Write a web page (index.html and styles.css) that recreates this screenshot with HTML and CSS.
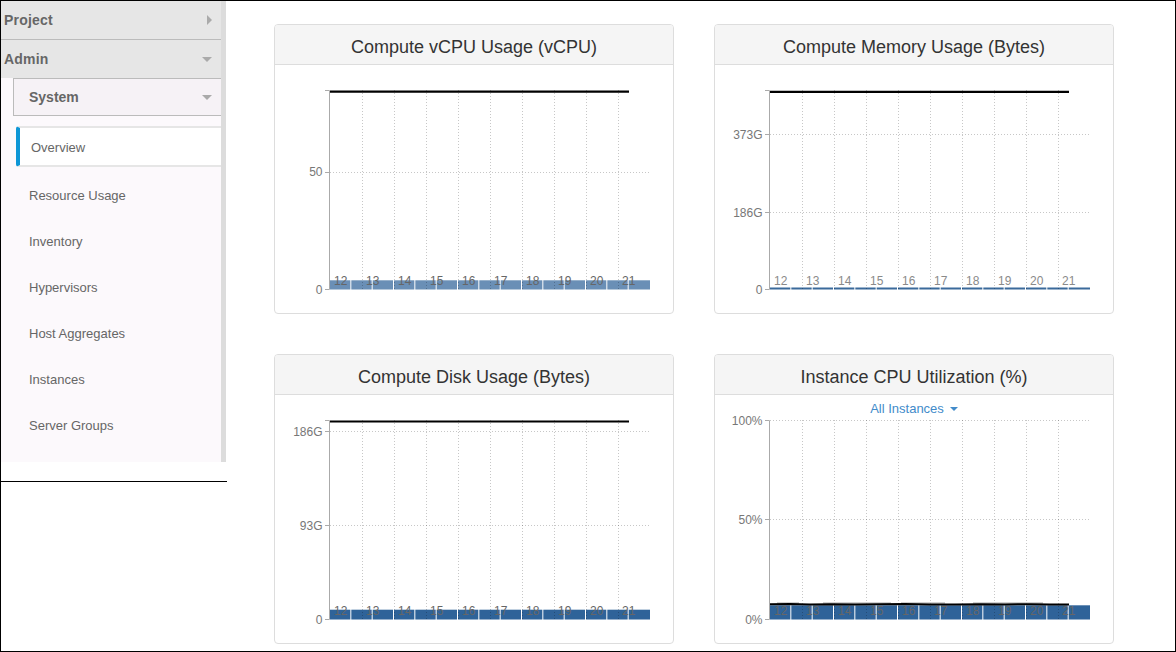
FILE: index.html
```html
<!DOCTYPE html>
<html>
<head>
<meta charset="utf-8">
<title>Overview</title>
<link rel="stylesheet" href="styles.css">
</head>
<body>
<svg class="defs" aria-hidden="true">
  <defs>
    <g id="vgrid" stroke="#000" stroke-opacity="0.22" stroke-dasharray="1 2">
      <line x1="87.5" y1="25" x2="87.5" y2="224"/>
      <line x1="119.5" y1="25" x2="119.5" y2="224"/>
      <line x1="151.5" y1="25" x2="151.5" y2="224"/>
      <line x1="183.5" y1="25" x2="183.5" y2="224"/>
      <line x1="215.5" y1="25" x2="215.5" y2="224"/>
      <line x1="247.5" y1="25" x2="247.5" y2="224"/>
      <line x1="279.5" y1="25" x2="279.5" y2="224"/>
      <line x1="311.5" y1="25" x2="311.5" y2="224"/>
      <line x1="343.5" y1="25" x2="343.5" y2="224"/>
    </g>
    <g id="bars">
      <rect x="55" y="0" width="20.33" height="1"/>
      <rect x="76.33" y="0" width="20.33" height="1"/>
      <rect x="97.67" y="0" width="20.33" height="1"/>
      <rect x="119" y="0" width="20.33" height="1"/>
      <rect x="140.33" y="0" width="20.33" height="1"/>
      <rect x="161.67" y="0" width="20.33" height="1"/>
      <rect x="183" y="0" width="20.33" height="1"/>
      <rect x="204.33" y="0" width="20.33" height="1"/>
      <rect x="225.67" y="0" width="20.33" height="1"/>
      <rect x="247" y="0" width="20.33" height="1"/>
      <rect x="268.33" y="0" width="20.33" height="1"/>
      <rect x="289.67" y="0" width="20.33" height="1"/>
      <rect x="311" y="0" width="20.33" height="1"/>
      <rect x="332.33" y="0" width="20.33" height="1"/>
      <rect x="353.67" y="0" width="21.33" height="1"/>
    </g>
    <g id="xlabels">
      <text x="59" y="220">12</text>
      <text x="91" y="220">13</text>
      <text x="123" y="220">14</text>
      <text x="155" y="220">15</text>
      <text x="187" y="220">16</text>
      <text x="219" y="220">17</text>
      <text x="251" y="220">18</text>
      <text x="283" y="220">19</text>
      <text x="315" y="220">20</text>
      <text x="347" y="220">21</text>
    </g>
  </defs>
</svg>

<div class="frame">
  <aside class="sidebar">
    <nav class="nav">
      <div class="panel-row project"><span>Project</span><i class="tri-right"></i></div>
      <div class="panel-row"><span>Admin</span><i class="tri-down"></i></div>
      <div class="group-row"><span>System</span><i class="tri-down"></i></div>
      <div class="subnav">
        <a class="active" href="#">Overview</a>
        <a href="#">Resource Usage</a>
        <a href="#">Inventory</a>
        <a href="#">Hypervisors</a>
        <a href="#">Host Aggregates</a>
        <a href="#">Instances</a>
        <a href="#">Server Groups</a>
      </div>
    </nav>
  </aside>

  <main class="main">
    <section class="card">
      <h3 class="card-h">Compute vCPU Usage (vCPU)</h3>
      <div class="card-b">
        <svg class="chart" width="398" height="248" viewBox="0 0 398 248">
          <use href="#bars" class="bars-light" transform="translate(0,215.3) scale(1,9.2)"/>
          <line class="hg" x1="55" y1="107.5" x2="375" y2="107.5"/>
          <use href="#vgrid"/>
          <path class="axis" d="M50 25.5H54.5V224.5H50M50 107.5H54.5"/>
          <text class="yl" x="47.5" y="111">50</text>
          <text class="yl" x="47.5" y="228.5">0</text>
          <use href="#xlabels" class="xl"/>
          <line class="limit" x1="55" y1="26.7" x2="354" y2="26.7"/>
        </svg>
      </div>
    </section>

    <section class="card">
      <h3 class="card-h">Compute Memory Usage (Bytes)</h3>
      <div class="card-b">
        <svg class="chart" width="398" height="248" viewBox="0 0 398 248">
          <use href="#bars" class="bars-mid" transform="translate(0,222.5) scale(1,2)"/>
          <line class="hg" x1="55" y1="69.5" x2="375" y2="69.5"/>
          <line class="hg" x1="55" y1="147.5" x2="375" y2="147.5"/>
          <use href="#vgrid"/>
          <path class="axis" d="M50 25.5H54.5V224.5H50M50 69.5H54.5M50 147.5H54.5"/>
          <text class="yl" x="47.5" y="74">373G</text>
          <text class="yl" x="47.5" y="152">186G</text>
          <text class="yl" x="47.5" y="228.5">0</text>
          <use href="#xlabels" class="xl light"/>
          <line class="limit" x1="55" y1="26.8" x2="354" y2="26.8"/>
        </svg>
      </div>
    </section>

    <section class="card">
      <h3 class="card-h">Compute Disk Usage (Bytes)</h3>
      <div class="card-b">
        <svg class="chart" width="398" height="248" viewBox="0 0 398 248">
          <use href="#bars" class="bars-dark" transform="translate(0,214.7) scale(1,9.8)"/>
          <line class="hg" x1="55" y1="36.5" x2="375" y2="36.5"/>
          <line class="hg" x1="55" y1="130.5" x2="375" y2="130.5"/>
          <use href="#vgrid"/>
          <path class="axis" d="M50 25.5H54.5V224.5H50M50 36.5H54.5M50 130.5H54.5"/>
          <text class="yl" x="47.5" y="41">186G</text>
          <text class="yl" x="47.5" y="135">93G</text>
          <text class="yl" x="47.5" y="228.5">0</text>
          <use href="#xlabels" class="xl"/>
          <line class="limit" x1="55" y1="26.5" x2="354" y2="26.5"/>
        </svg>
      </div>
    </section>

    <section class="card">
      <h3 class="card-h">Instance CPU Utilization (%)</h3>
      <div class="card-b">
        <svg class="chart" width="398" height="248" viewBox="0 0 398 248">
          <use href="#bars" class="bars-dark" transform="translate(0,210.3) scale(1,14.2)"/>
          <line class="hg" x1="55" y1="25.5" x2="375" y2="25.5"/>
          <line class="hg" x1="55" y1="124.5" x2="375" y2="124.5"/>
          <use href="#vgrid"/>
          <path class="axis" d="M50 25.5H54.5V224.5H50M50 124.5H54.5"/>
          <text class="yl" x="47.5" y="29.5">100%</text>
          <text class="yl" x="47.5" y="129">50%</text>
          <text class="yl" x="47.5" y="228.5">0%</text>
          <use href="#xlabels" class="xl"/>
          <path class="cpu-shade" d="M62 208H84M108 208H176M186 208H230M258 208H328"/>
          <path class="cpu-line" d="M55 209.3L75 209.1L95 209.6L115 209.2L140 209.4L165 209.3L190 209.1L215 209.5L240 209.6L265 209.2L290 209.4L315 209.2L335 209.5L354 209.4"/>
        </svg>
        <a class="instances" href="#">All Instances<i class="caret"></i></a>
      </div>
    </section>
  </main>
</div>
</body>
</html>
```

FILE: styles.css
```css
* {
  box-sizing: border-box;
  margin: 0;
  padding: 0;
}

html,
body {
  width: 1176px;
  height: 652px;
  overflow: hidden;
  background: #fff;
}

body {
  font-family: "Liberation Sans", Arial, sans-serif;
}

.defs {
  position: absolute;
  width: 0;
  height: 0;
  overflow: hidden;
}

.frame {
  width: 1176px;
  height: 652px;
  border: 1px solid #000;
  display: flex;
  align-items: flex-start;
}

/* ---------- sidebar ---------- */
.sidebar {
  flex: none;
  width: 226px;
  height: 481px;
  border-bottom: 1px solid #000;
}

.nav {
  width: 225px;
  height: 461px;
  border-right: 5px solid #dcdcdc;
  background: #fcf9fc;
}

.panel-row {
  display: flex;
  align-items: center;
  justify-content: space-between;
  height: 38px;
  padding: 0 9px 0 3px;
  background: #e6e6e6;
  color: #666;
  font-size: 14px;
  font-weight: bold;
  letter-spacing: 0.2px;
}

.panel-row.project {
  height: 39px;
  border-bottom: 1px solid #bbb;
}

.group-row {
  display: flex;
  align-items: center;
  justify-content: space-between;
  height: 38px;
  margin-left: 12px;
  padding: 0 9px 0 15px;
  border: 1px solid #bbb;
  border-right: 0;
  background: #f6f2f6;
  color: #666;
  font-size: 14px;
  font-weight: bold;
}

.tri-right {
  width: 0;
  height: 0;
  border-top: 5px solid transparent;
  border-bottom: 5px solid transparent;
  border-left: 5px solid #aaa;
}

.tri-down {
  width: 0;
  height: 0;
  border-left: 5px solid transparent;
  border-right: 5px solid transparent;
  border-top: 5px solid #aaa;
}

.subnav {
  padding: 10px 0 14px;
}

.subnav a {
  display: block;
  height: 46px;
  padding: 2px 0 0 28px;
  line-height: 44px;
  font-size: 13px;
  color: #666;
  text-decoration: none;
}

.subnav a.active {
  height: 41px;
  line-height: 39px;
  margin: 0 0 5px 15px;
  padding: 0 0 0 11px;
  background: #fff;
  border-top: 2px solid #e6e6e6;
  border-bottom: 2px solid #e6e6e6;
  border-left: 4px solid #0d96d6;
  border-radius: 3px 0 0 3px;
  color: #666;
}

/* ---------- main ---------- */
.main {
  flex: 1;
  display: grid;
  grid-template-columns: 400px 400px;
  grid-auto-rows: 290px;
  gap: 40px;
  padding: 23px 0 0 47px;
}

.card {
  border: 1px solid #ddd;
  border-radius: 4px;
  background: #fff;
  overflow: hidden;
}

.card-h {
  height: 40px;
  padding-top: 11px;
  line-height: 22px;
  border-bottom: 1px solid #ddd;
  background: #f5f5f5;
  text-align: center;
  font-size: 18px;
  font-weight: normal;
  color: #333;
}

.card-b {
  position: relative;
  height: 248px;
}

.chart {
  display: block;
  font-family: "Liberation Sans", Arial, sans-serif;
  font-size: 12px;
}

.chart .yl {
  fill: #777;
  text-anchor: end;
}

.chart .xl {
  fill: #666;
  font-size: 12px;
}

.chart .xl.light {
  fill: #8a8a8a;
}

.chart .hg {
  stroke: #000;
  stroke-opacity: 0.22;
  stroke-dasharray: 1 2;
}

.chart .axis {
  fill: none;
  stroke: #aaa;
  stroke-width: 1;
}

.chart .limit {
  stroke: #000;
  stroke-width: 2.2;
}

.bars-light {
  fill: #6a8fb6;
}

.bars-mid {
  fill: #3b6a9b;
}

.bars-dark {
  fill: #2f6399;
}

.cpu-shade {
  fill: none;
  stroke: #a0a0a0;
  stroke-width: 1;
}

.cpu-line {
  fill: none;
  stroke: #000;
  stroke-width: 2;
}

.instances {
  position: absolute;
  top: 5px;
  left: 0;
  right: 0;
  text-align: center;
  font-size: 13px;
  line-height: 18px;
  color: #428bca;
  text-decoration: none;
}

.caret {
  display: inline-block;
  width: 0;
  height: 0;
  margin-left: 6px;
  vertical-align: 2px;
  border-left: 4px solid transparent;
  border-right: 4px solid transparent;
  border-top: 4px solid #428bca;
}
```
